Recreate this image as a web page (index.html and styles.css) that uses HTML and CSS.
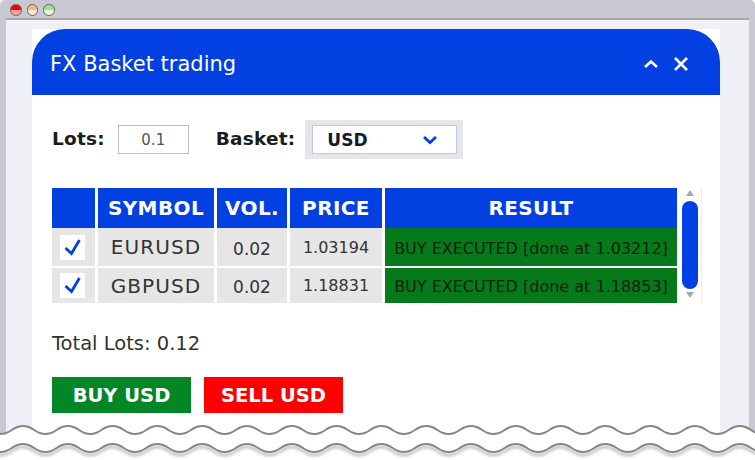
FILE: index.html
```html
<!DOCTYPE html>
<html lang="en">
<head>
  <meta charset="UTF-8">
  <title>FX Basket trading</title>
  <link rel="stylesheet" href="styles.css">
</head>
<body>
  <div class="window">
    <div class="titlebar">
      <span class="light light-red"></span>
      <span class="light light-amber"></span>
      <span class="light light-green"></span>
    </div>
    <div class="desk">
      <div class="panel">
        <header class="panel-head">
          <h1>FX Basket trading</h1>
          <div class="head-icons">
            <svg width="16" height="16" viewBox="0 0 16 16"><path d="M2 11 L8 5.5 L14 11" fill="none" stroke="#fff" stroke-width="2.6"/></svg>
            <svg width="16" height="16" viewBox="0 0 16 16"><path d="M2 2 L14 14 M14 2 L2 14" fill="none" stroke="#fff" stroke-width="2.6"/></svg>
          </div>
        </header>

        <div class="panel-body">
          <div class="controls">
            <label class="ctl-label">Lots:</label>
            <div class="lots-input">0.1</div>
            <label class="ctl-label basket-label">Basket:</label>
            <div class="select-wrap">
              <div class="select">
                <span>USD</span>
                <svg width="16" height="10" viewBox="0 0 16 10"><path d="M2 2 L8 7.5 L14 2" fill="none" stroke="#0340e2" stroke-width="2.8"/></svg>
              </div>
            </div>
          </div>

          <div class="table-wrap">
            <table class="orders">
              <thead>
                <tr>
                  <th class="col-check"></th>
                  <th class="col-symbol">SYMBOL</th>
                  <th class="col-vol">VOL.</th>
                  <th class="col-price">PRICE</th>
                  <th class="col-result">RESULT</th>
                </tr>
              </thead>
              <tbody>
                <tr>
                  <td><span class="check"><svg width="25" height="25" viewBox="0 0 25 25"><path d="M5.500 13 L11.500 18.500 L19.500 5" fill="none" stroke="#0340e2" stroke-width="2.800"/></svg></span></td>
                  <td class="symbol">EURUSD</td>
                  <td class="vol">0.02</td>
                  <td class="price">1.03194</td>
                  <td class="result">BUY EXECUTED [done at 1.03212]</td>
                </tr>
                <tr>
                  <td><span class="check"><svg width="25" height="25" viewBox="0 0 25 25"><path d="M5.500 13 L11.500 18.500 L19.500 5" fill="none" stroke="#0340e2" stroke-width="2.800"/></svg></span></td>
                  <td class="symbol">GBPUSD</td>
                  <td class="vol">0.02</td>
                  <td class="price">1.18831</td>
                  <td class="result">BUY EXECUTED [done at 1.18853]</td>
                </tr>
              </tbody>
            </table>
            <div class="scrollbar">
              <span class="arrow arrow-up"></span>
              <span class="thumb"></span>
              <span class="arrow arrow-down"></span>
            </div>
          </div>

          <p class="total">Total Lots: 0.12</p>

          <div class="actions">
            <button class="btn btn-buy">BUY USD</button>
            <button class="btn btn-sell">SELL USD</button>
          </div>
        </div>
      </div>
    </div>
  </div>

  <!-- torn edge over the bottom of the window -->
  <svg class="torn" width="755" height="44" viewBox="0 0 755 44">
    <defs>
      <filter id="edge-shadow" x="-5%" y="-50%" width="110%" height="250%">
        <feDropShadow dx="0" dy="3" stdDeviation="1.500" flood-color="#000" flood-opacity="0.35"/>
      </filter>
      <path id="wave" d="M-33 0 q11.200 -8 22.400 0 t22.400 0 t22.400 0 t22.400 0 t22.400 0 t22.400 0 t22.400 0 t22.400 0 t22.400 0 t22.400 0 t22.400 0 t22.400 0 t22.400 0 t22.400 0 t22.400 0 t22.400 0 t22.400 0 t22.400 0 t22.400 0 t22.400 0 t22.400 0 t22.400 0 t22.400 0 t22.400 0 t22.400 0 t22.400 0 t22.400 0 t22.400 0 t22.400 0 t22.400 0 t22.400 0 t22.400 0 t22.400 0 t22.400 0 t22.400 0 t22.400 0 t22.400 0 t22.400 0"/>
    </defs>
    <path class="wave-fill" transform="translate(0 14)" d="M-33 0 q11.200 -8 22.400 0 t22.400 0 t22.400 0 t22.400 0 t22.400 0 t22.400 0 t22.400 0 t22.400 0 t22.400 0 t22.400 0 t22.400 0 t22.400 0 t22.400 0 t22.400 0 t22.400 0 t22.400 0 t22.400 0 t22.400 0 t22.400 0 t22.400 0 t22.400 0 t22.400 0 t22.400 0 t22.400 0 t22.400 0 t22.400 0 t22.400 0 t22.400 0 t22.400 0 t22.400 0 t22.400 0 t22.400 0 t22.400 0 t22.400 0 t22.400 0 t22.400 0 t22.400 0 t22.400 0 V40 H-33 Z"/>
    <use href="#wave" y="14" class="wave-line"/>
    <use href="#wave" y="32" class="wave-line" filter="url(#edge-shadow)"/>
  </svg>
</body>
</html>
```

FILE: styles.css
```css
* {
  box-sizing: border-box;
  margin: 0;
  padding: 0;
}

html, body {
  width: 755px;
  height: 460px;
  overflow: hidden;
  background: #fff;
}

body {
  font-family: "DejaVu Sans", "Liberation Sans", sans-serif;
  color: #222;
  position: relative;
}

/* Window chrome */
.window {
  height: 460px;
  background: #c8c8d3;
  border-radius: 5px 5px 0 0;
  padding: 0 6px;
  display: flex;
  flex-direction: column;
}

.titlebar {
  height: 18px;
  display: flex;
  align-items: center;
  gap: 5px;
  padding: 2px 0 0 4px;
  flex: none;
}

.light {
  width: 11.500px;
  height: 11.500px;
  border-radius: 50%;
  border: 1px solid #666;
}

.light-red { background: linear-gradient(#f00 50%, #f9a0a0 50%); }
.light-amber { background: linear-gradient(#f8b878 50%, #fde8d0 50%); }
.light-green { background: linear-gradient(#a0e090 50%, #e4f8dc 50%); }

.desk {
  flex: 1;
  background: #eff0f5;
  border-top: 2px solid #a9a9a9;
  padding: 9px 29px 0 26px;
}

/* Panel */
.panel {
  background: #fff;
  height: 420px;
}

.panel-head {
  height: 66px;
  background: #0340e2;
  border-radius: 33px 33px 0 0;
  color: #fff;
  padding: 0 31px 0 18px;
  display: flex;
  align-items: center;
  justify-content: space-between;
}

.panel-head h1 {
  font-size: 21px;
  font-weight: 400;
  margin-top: 3px;
}

.head-icons {
  display: flex;
  gap: 14px;
  margin-top: 3px;
}

.panel-body {
  padding: 25px 20px 0;
}

/* Lots and basket row */
.controls {
  display: flex;
  align-items: center;
  height: 39px;
}

.ctl-label {
  font-size: 18.500px;
  font-weight: 700;
  letter-spacing: 0.200px;
  color: #1c1c1c;
  margin-bottom: 2px;
}

.lots-input {
  width: 71px;
  height: 29px;
  margin-left: 13px;
  border: 1px solid #bdbdbd;
  font-size: 15px;
  color: #555;
  display: flex;
  align-items: center;
  justify-content: center;
}

.basket-label {
  margin-left: 27px;
}

.select-wrap {
  margin-left: 10px;
  background: #e6e6ea;
  padding: 5px 6px 5px 7px;
}

.select {
  width: 145px;
  height: 29px;
  background: #fff;
  border: 1px solid #b9c9f6;
  padding: 0 18px 0 14px;
  display: flex;
  align-items: center;
  justify-content: space-between;
  font-size: 17px;
  font-weight: 700;
  color: #14192e;
}

/* Orders table */
.table-wrap {
  display: flex;
  margin-top: 29px;
  width: 650px;
  border-right: 1px solid #ececec;
}

.orders {
  width: 625px;
  border-collapse: separate;
  border-spacing: 0;
  table-layout: fixed;
}

.orders th {
  height: 40px;
  background: #0340e2;
  color: #fff;
  font-size: 20px;
  font-weight: 700;
  letter-spacing: 0.400px;
  border-right: 3px solid #fff;
}

.orders td {
  height: 40px;
  background: #e6e6e6;
  color: #333;
  font-size: 16px;
  text-align: center;
  border-right: 3px solid #fff;
  border-bottom: 2px solid #fff;
}

.orders tr:last-child td {
  height: 35px;
  border-bottom: 0;
}

.col-check { width: 46px; }
.col-symbol { width: 119px; }
.col-vol { width: 73px; }
.col-price { width: 95px; }
.col-result { width: 292px; }

.orders th:last-child,
.orders td:last-child {
  border-right: 0;
}

.orders td.symbol {
  font-size: 20px;
  letter-spacing: 1.100px;
}

.orders td.vol {
  font-size: 17px;
  padding-top: 3px;
}

.orders td.result {
  background: #067a1a;
  color: #0a2208;
  padding-top: 2px;
  white-space: nowrap;
}

.check {
  width: 25px;
  height: 25px;
  background: #fff;
  margin-left: 8px;
  display: block;
}

.check svg {
  display: block;
}

/* Scrollbar */
.scrollbar {
  width: 24px;
  display: flex;
  flex-direction: column;
  align-items: center;
  padding: 2px 0 0 2px;
}

.thumb {
  width: 16px;
  height: 88px;
  background: #0340e2;
  border-radius: 8px;
  margin: 5px 0 3px;
}

.arrow {
  width: 0;
  height: 0;
  border-left: 4px solid transparent;
  border-right: 4px solid transparent;
}

.arrow-up { border-bottom: 6px solid #a8a8a8; }
.arrow-down { border-top: 6px solid #a8a8a8; }

/* Total and actions */
.total {
  margin-top: 29px;
  font-size: 19.500px;
  color: #333;
}

.actions {
  display: flex;
  gap: 13px;
  margin-top: 22px;
}

.btn {
  width: 139px;
  height: 36px;
  border: 0;
  color: #fff;
  font-family: inherit;
  font-size: 19.500px;
  font-weight: 700;
}

.btn-buy { background: #038626; }
.btn-sell { background: #ff0000; }

/* Torn bottom edge */
.torn {
  position: absolute;
  left: 0;
  top: 416px;
  display: block;
}

.wave-line {
  fill: none;
  stroke: #868686;
  stroke-width: 2;
}

.wave-fill {
  fill: #fff;
}
```
